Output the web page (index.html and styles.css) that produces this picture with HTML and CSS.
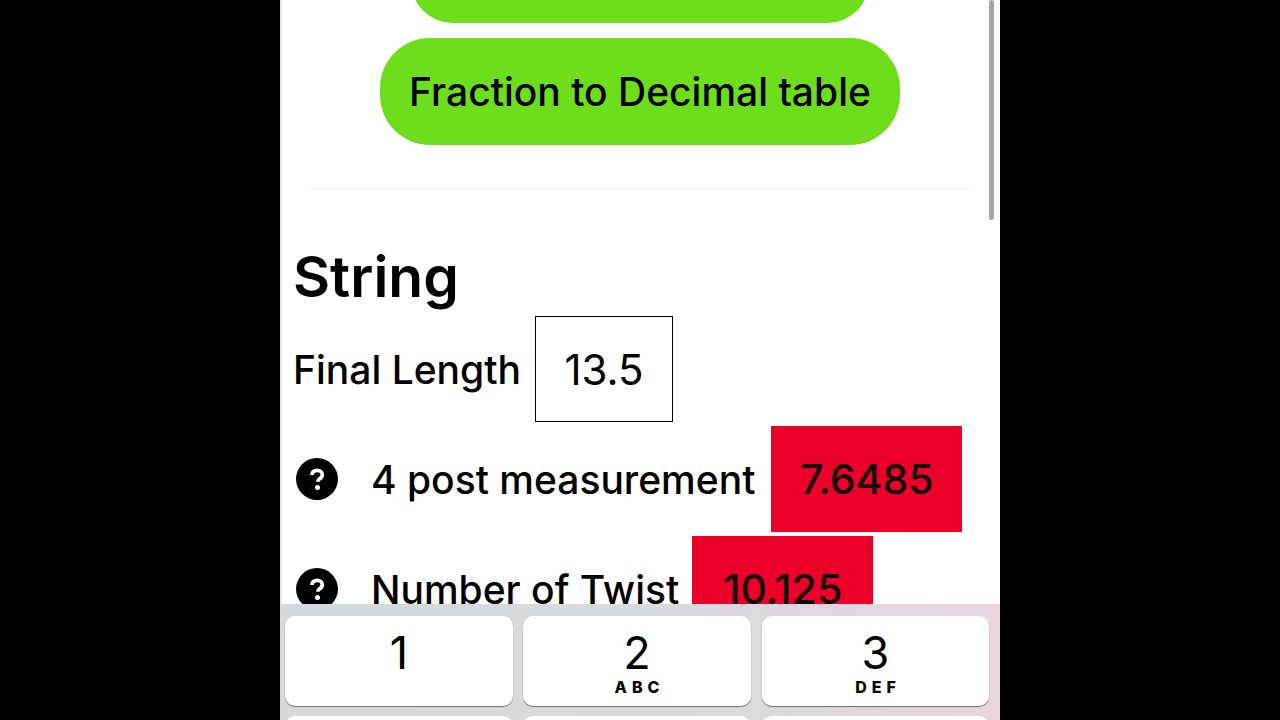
FILE: index.html
```html
<!DOCTYPE html>
<html lang="en">
<head>
    <meta charset="UTF-8">
    <meta name="viewport" content="width=device-width, initial-scale=1.0">
    <title>String calculator</title>
    <link rel="stylesheet" href="styles.css">
</head>
<body>
    <div class="phone">
        <div class="content">
            <div class="buttons">
                <button class="green-button top-button"></button>
                <button class="green-button">Fraction to Decimal table</button>
            </div>
            <hr class="divider">
            <h1 class="title">String</h1>
            <div class="row length-row">
                <span class="label">Final Length</span>
                <div class="input-box">13.5</div>
            </div>
            <div class="row measure-row">
                <span class="help">
                    <svg viewBox="0 0 42 42" width="42" height="42">
                        <circle cx="21" cy="21" r="21" fill="#000"/>
                        <path d="M16 17c0-3 2.200-4.600 5.200-4.600 3 0 5.100 1.800 5.100 4.300 0 1.900-1 3-2.500 4-1.500 1-2 1.600-2 3.100" fill="none" stroke="#fff" stroke-width="3.800"/>
                        <circle cx="21.500" cy="29.500" r="2.500" fill="#fff"/>
                    </svg>
                </span>
                <span class="label">4 post measurement</span>
                <div class="result post-result">7.6485</div>
            </div>
            <div class="row twist-row">
                <span class="help">
                    <svg viewBox="0 0 42 42" width="42" height="42">
                        <circle cx="21" cy="21" r="21" fill="#000"/>
                        <path d="M16 17c0-3 2.200-4.600 5.200-4.600 3 0 5.100 1.800 5.100 4.300 0 1.900-1 3-2.500 4-1.500 1-2 1.600-2 3.100" fill="none" stroke="#fff" stroke-width="3.800"/>
                        <circle cx="21.500" cy="29.500" r="2.500" fill="#fff"/>
                    </svg>
                </span>
                <span class="label">Number of Twist</span>
                <div class="result twist-result">10.125</div>
            </div>
        </div>
        <div class="scrollbar"></div>
        <div class="keyboard">
            <div class="key"><span class="digit">1</span></div>
            <div class="key"><span class="digit">2</span><span class="letters">ABC</span></div>
            <div class="key"><span class="digit">3</span><span class="letters">DEF</span></div>
            <div class="key"></div>
            <div class="key"></div>
            <div class="key"></div>
        </div>
    </div>
</body>
</html>
```
FILE: styles.css
```css
html, body {
    height: 100%;
}
body {
    margin: 0;
    background-color: #000;
    display: flex;
    justify-content: center;
    overflow: hidden;
    font-family: Inter, "Liberation Sans", sans-serif;
    color: #000;
}
.phone {
    position: relative;
    width: 720px;
    height: 720px;
    background-color: #fff;
    box-shadow: inset 2px 0 0 #e8e8e8;
    overflow: hidden;
}
.buttons {
    display: flex;
    flex-direction: column;
    align-items: center;
    gap: 15px;
    margin-top: -60px;
}
.green-button {
    width: 520px;
    height: 107px;
    border: none;
    border-radius: 50px;
    background-color: #6edd1b;
    font-family: inherit;
    font-size: 39px;
    font-weight: 500;
    color: #000;
    white-space: nowrap;
    padding: 0;
}
.top-button {
    width: 458px;
    height: 83px;
}
.divider {
    height: 1px;
    margin: 43px 30px 0;
    border: none;
    background-color: #eeeeee;
}
.title {
    margin: 56px 0 0 13px;
    font-size: 57px;
    font-weight: 600;
    line-height: 64px;
}
.row {
    display: flex;
    align-items: center;
}
.label {
    font-size: 39px;
    font-weight: 500;
    white-space: nowrap;
}
.length-row {
    margin: 7px 0 0 13px;
    gap: 14px;
}
.input-box {
    box-sizing: border-box;
    width: 138px;
    height: 106px;
    border: 1px solid #000;
    display: flex;
    align-items: center;
    justify-content: center;
    font-size: 42px;
    font-weight: 400;
}
.measure-row {
    margin: 4px 0 0 16px;
}
.twist-row {
    margin: 4px 0 0 16px;
}
.help {
    width: 42px;
    height: 42px;
    margin-right: 33px;
    flex-shrink: 0;
}
.result {
    height: 106px;
    background-color: #ea0029;
    display: flex;
    align-items: center;
    justify-content: center;
    font-size: 41px;
    font-weight: 500;
    color: #140306;
}
.post-result {
    width: 191px;
    margin-left: 16px;
}
.twist-result {
    width: 181px;
    margin-left: 13px;
}
.scrollbar {
    position: absolute;
    top: 0;
    right: 6px;
    width: 5px;
    height: 220px;
    border-radius: 3px;
    background-color: #a6a6a6;
}
.keyboard {
    position: absolute;
    left: 0;
    right: 0;
    top: 604px;
    height: 116px;
    box-sizing: border-box;
    padding: 12px 10px 0 5px;
    display: grid;
    grid-template-columns: 228px 228px 228px;
    grid-auto-rows: 90px;
    column-gap: 10px;
    row-gap: 10px;
    background: linear-gradient(90deg, #d5d9dc 0%, #d8dadd 50%, #e6d5df 100%);
}
.key {
    background-color: #fff;
    border-radius: 10px;
    box-shadow: 0 1px 1px #6f6f6f;
    display: flex;
    flex-direction: column;
    align-items: center;
    padding-top: 14px;
    box-sizing: border-box;
}
.key:nth-child(3n) {
    margin-left: 1px;
}
.digit {
    font-size: 45px;
    line-height: 46px;
    font-weight: 400;
}
.letters {
    margin-top: 3px;
    margin-right: -5px;
    font-size: 16px;
    line-height: 16px;
    font-weight: 800;
    letter-spacing: 5px;
}
```
